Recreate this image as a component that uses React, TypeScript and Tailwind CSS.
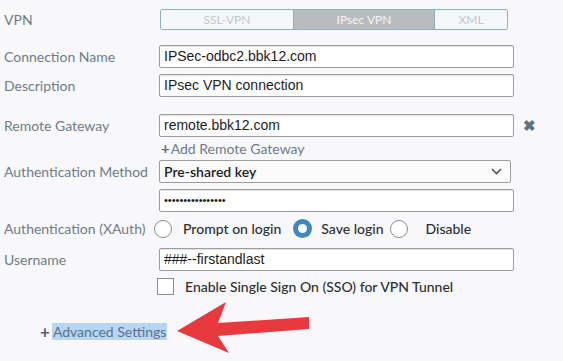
import React from "react";

const lato = { fontFamily: "Lato, 'Open Sans', sans-serif" };

function Label({ children }: { children: React.ReactNode }) {
  return (
    <div className="w-[155px] shrink-0 text-[14px] text-[#6e7c87]" style={lato}>
      {children}
    </div>
  );
}

function Input({ value, small }: { value: string; small?: boolean }) {
  return (
    <div
      className={
        "h-[23px] w-[355px] flex items-center px-[4px] bg-white border border-[#9d9d9d] rounded-[2px] text-[#1d1d1d] shadow-[inset_0_1px_1px_rgba(0,0,0,0.12)] " +
        (small ? "text-[11px]" : "text-[14px]")
      }
      style={{ fontFamily: "'Liberation Sans', Arial, sans-serif" }}
    >
      {value}
    </div>
  );
}

function Radio({ checked }: { checked?: boolean }) {
  return checked ? (
    <div className="w-[19px] h-[19px] rounded-full bg-[#3f86c4] flex items-center justify-center shrink-0">
      <div className="w-[9px] h-[9px] rounded-full bg-white" />
    </div>
  ) : (
    <div className="w-[18px] h-[18px] rounded-full border border-[#8c8c8c] bg-white shrink-0" />
  );
}

export default function App() {
  return (
    <div className="w-[563px] h-[361px] bg-[#f8f8fa] relative overflow-hidden pl-[4px] pt-[9px]">
      {/* VPN */}
      <div className="flex items-center h-[21px]">
        <Label>VPN</Label>
        <div className="ml-[1px] flex h-[21px] w-[348px] border border-[#8eaec4] rounded-[2px] text-[12px] text-[#c3c6c9]" style={lato}>
          <div className="w-[133px] flex items-center justify-center bg-[#f5f8fa] border-r border-[#8eaec4]">SSL-VPN</div>
          <div className="w-[140px] flex items-center justify-center bg-[#b9bcbf] text-[#f4f4f4]">IPsec VPN</div>
          <div className="flex-1 flex items-center justify-center bg-[#f5f8fa] border-l border-[#8eaec4]">XML</div>
        </div>
      </div>

      <div className="flex items-center mt-[15px]">
        <Label>Connection Name</Label>
        <Input value="IPSec-odbc2.bbk12.com" />
      </div>
      <div className="flex items-center mt-[6px]">
        <Label>Description</Label>
        <Input value="IPsec VPN connection" />
      </div>

      <div className="flex items-center mt-[17px]">
        <Label>Remote Gateway</Label>
        <Input value="remote.bbk12.com" />
        <span className="ml-[9px] text-[#5f7180] text-[15px] font-bold leading-none" style={lato}>✖</span>
      </div>
      <div className="flex items-center h-[16px] mt-[3px]">
        <div className="w-[157px] shrink-0" />
        <div className="text-[14px] text-[#6e7c87] flex items-center" style={lato}>
          <span className="text-[#5f7180] font-bold text-[15px] leading-none mr-[1px]">+</span>Add Remote Gateway
        </div>
      </div>

      <div className="flex items-center mt-[4px]">
        <Label>Authentication Method</Label>
        <div
          className="h-[23px] w-[352px] flex items-center justify-between pl-[4px] pr-[8px] bg-[#fbfbfb] border border-[#9d9d9d] rounded-[2px] text-[14px] text-[#1d1d1d] font-semibold"
          style={lato}
        >
          <span>Pre-shared key</span>
          <svg width="11" height="7" viewBox="0 0 11 7">
            <path d="M1 1l4.5 4.5L10 1" fill="none" stroke="#555" strokeWidth="1.6" />
          </svg>
        </div>
      </div>
      <div className="flex items-center mt-[6px]">
        <div className="w-[155px] shrink-0" />
        <Input value="••••••••••••••••" small />
      </div>

      <div className="flex items-center h-[19px] mt-[7px]">
        <div className="w-[150px] shrink-0 text-[14px] text-[#6e7c87] whitespace-nowrap" style={lato}>
          Authentication (XAuth)
        </div>
        <div className="flex items-center text-[14px] text-[#2b2f33] font-medium" style={lato}>
          <Radio />
          <span className="ml-[11px]">Prompt on login</span>
          <div className="ml-[12px]"><Radio checked /></div>
          <span className="ml-[9px]">Save login</span>
          <div className="ml-[6px]"><Radio /></div>
          <span className="ml-[18px]">Disable</span>
        </div>
      </div>

      <div className="flex items-center mt-[10px]">
        <Label>Username</Label>
        <Input value="###--firstandlast" />
      </div>

      <div className="flex items-center h-[18px] mt-[6px]">
        <div className="w-[153px] shrink-0" />
        <div className="w-[17px] h-[17px] border border-[#8c8c8c] bg-white" />
        <span className="ml-[11px] text-[14px] text-[#2b2f33] font-medium" style={lato}>
          Enable Single Sign On (SSO) for VPN Tunnel
        </span>
      </div>

      <div className="flex items-center h-[17px] mt-[28px] pl-[36px]">
        <span className="text-[#55606b] font-bold text-[17px] leading-none mr-[2px]" style={lato}>+</span>
        <span className="bg-[#b7d6f6] text-[#5d7186] text-[14px] leading-[17px] px-[1px]" style={lato}>
          Advanced Settings
        </span>
      </div>

      <svg className="absolute left-0 top-0" width="563" height="361" viewBox="0 0 563 361">
        <polygon
          points="177,331 226,302 218,323 309,317 309,329 218,336 229,353"
          fill="#e8393f"
        />
      </svg>
    </div>
  );
}
